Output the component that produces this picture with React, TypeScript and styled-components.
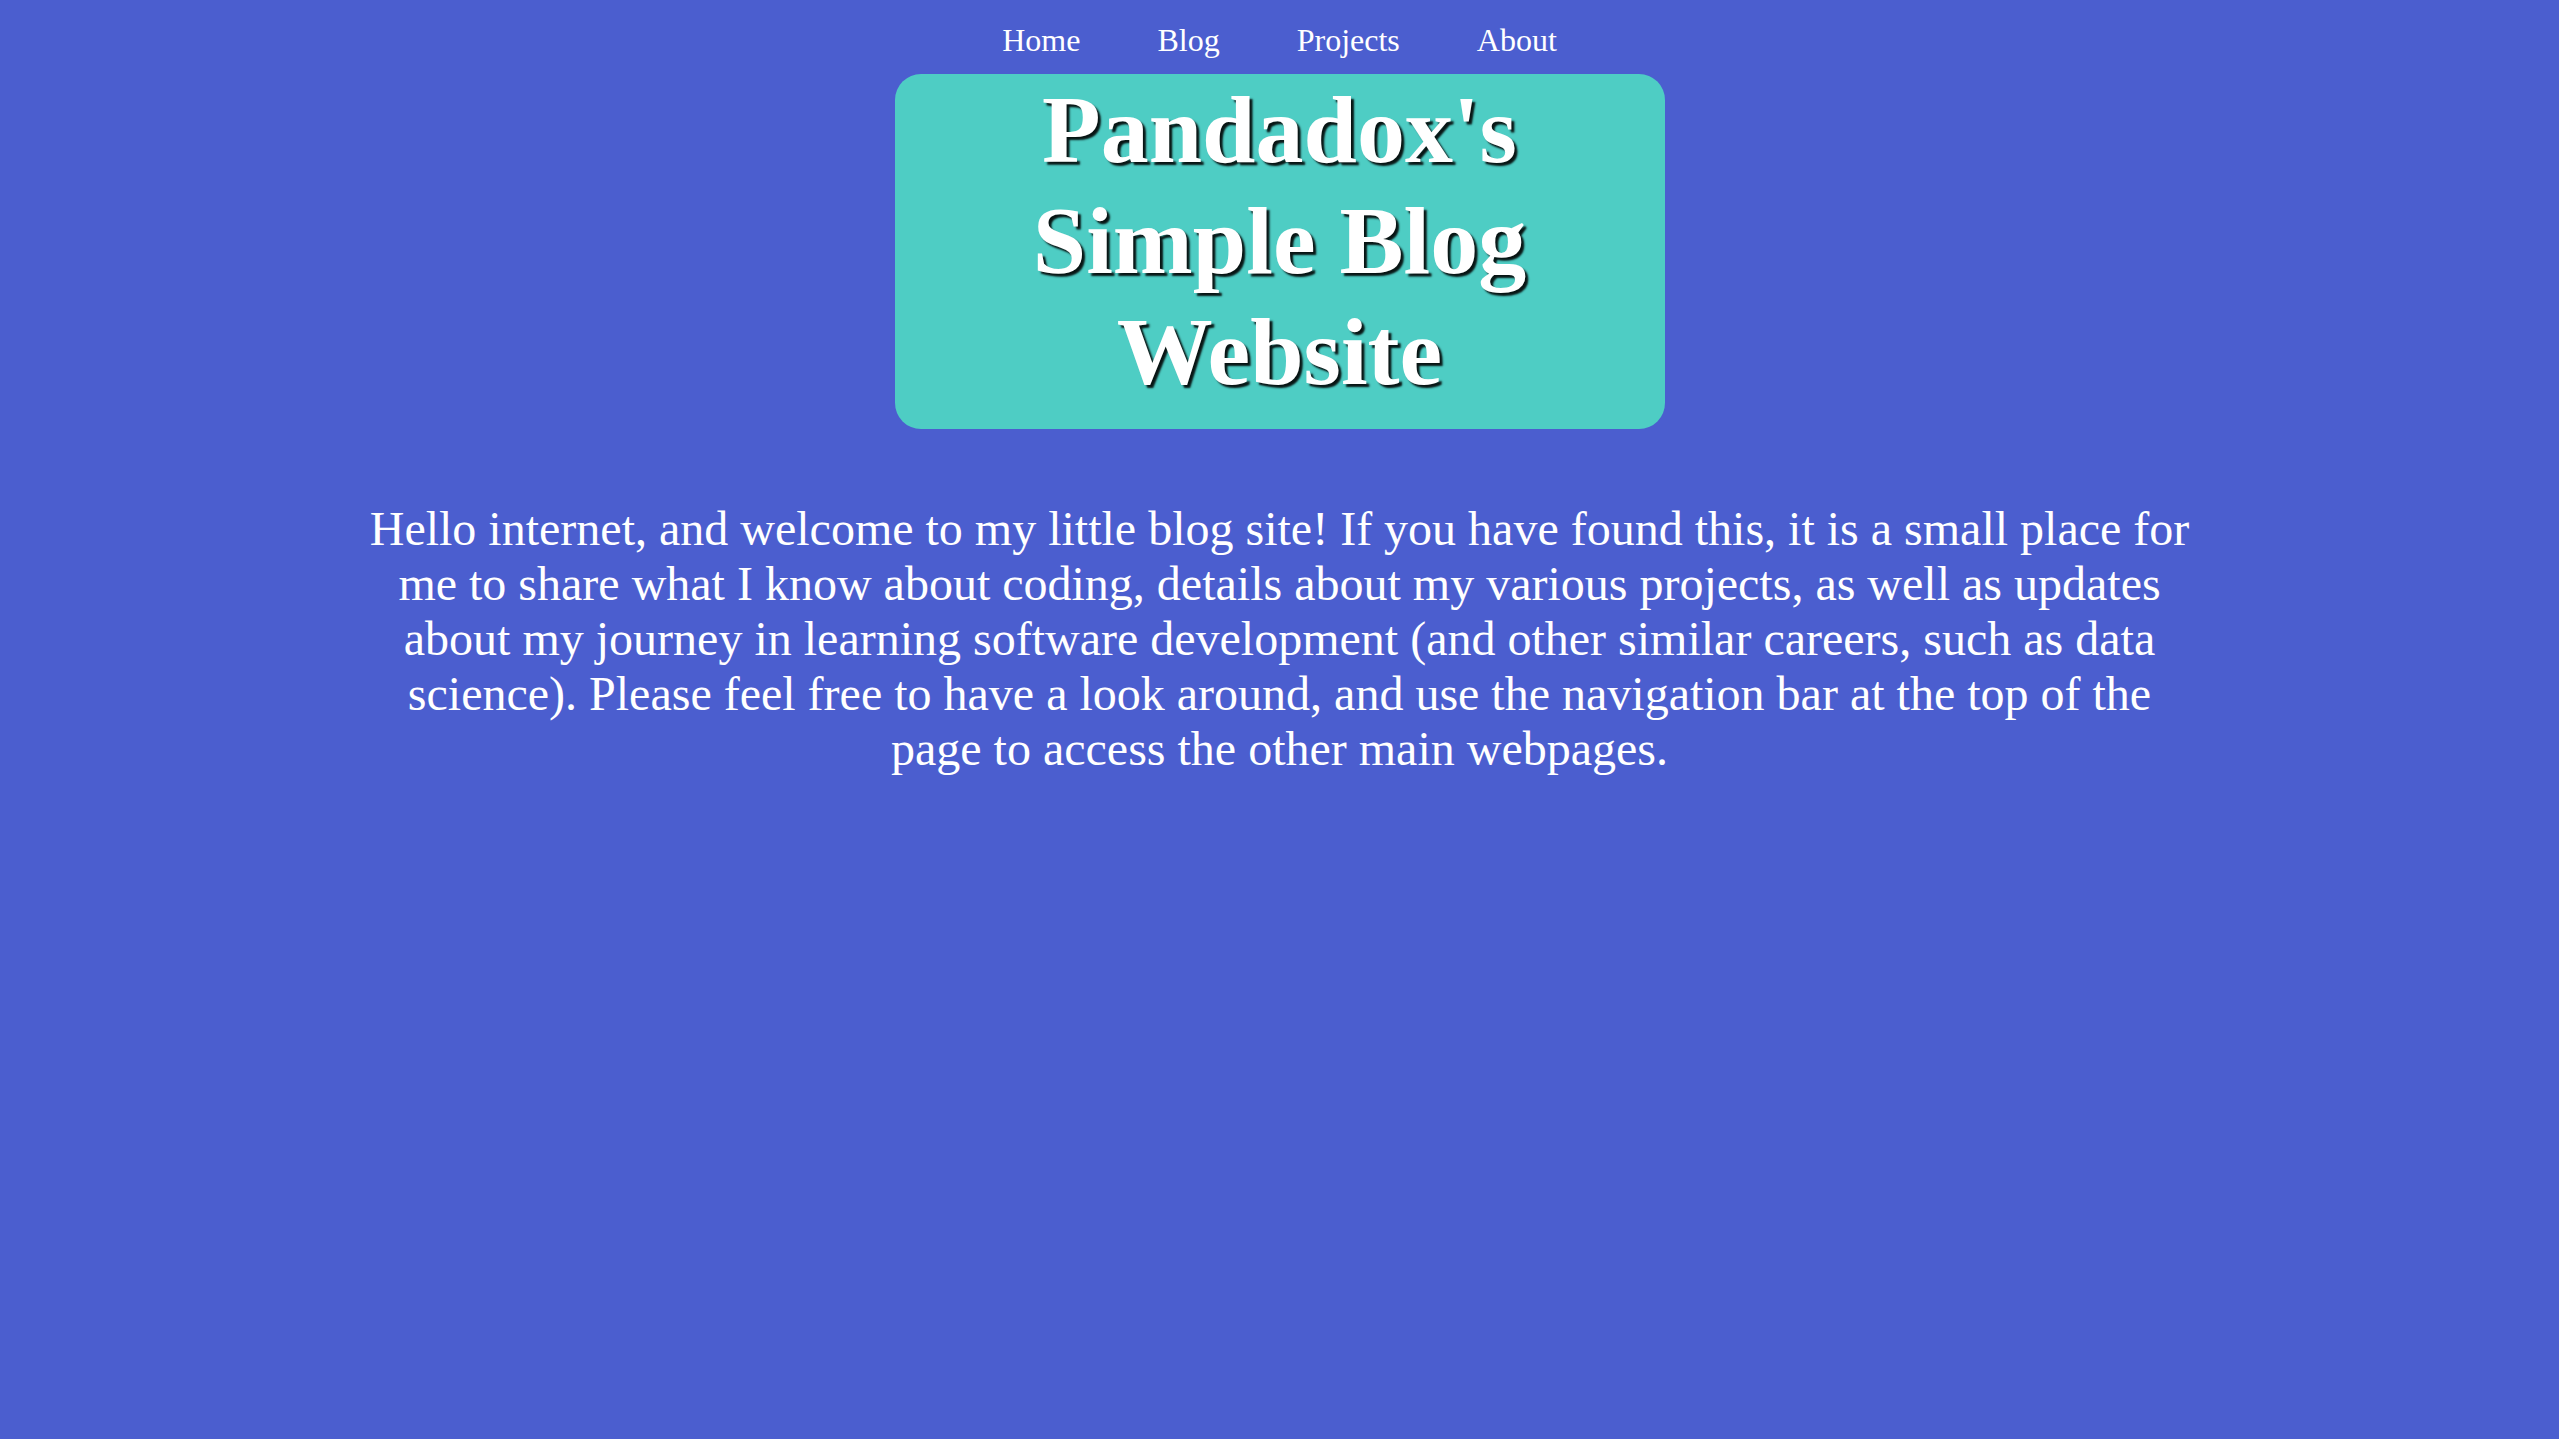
import React from "react";
import styled, { createGlobalStyle } from "styled-components";

const GlobalStyle = createGlobalStyle`
  html, body {
    margin: 0;
    padding: 0;
    background: #4b5ecf;
  }
  body {
    font-family: "Liberation Serif", "Times New Roman", serif;
    color: #ffffff;
    min-height: 100vh;
    overflow: hidden;
  }
`;

const Page = styled.div`
  display: flex;
  flex-direction: column;
  align-items: center;
  min-height: 100vh;
  background: #4b5ecf;
`;

const Nav = styled.nav`
  display: flex;
  justify-content: center;
  gap: 77px;
  padding: 22px 0 15px;
`;

const NavLink = styled.a`
  font-size: 32px;
  line-height: normal;
  color: #ffffff;
  text-decoration: none;
  cursor: pointer;
`;

const Banner = styled.header`
  width: 770px;
  box-sizing: border-box;
  background: #4ecdc4;
  border-radius: 26px;
  padding: 0 0 22px;
`;

const Title = styled.h1`
  margin: 0;
  font-size: 96px;
  font-weight: 700;
  line-height: normal;
  text-align: center;
  color: #ffffff;
  text-shadow: 3px 3px 2px rgba(0, 0, 0, 0.9);
`;

const Intro = styled.p`
  margin: 72px 0 0;
  max-width: 1830px;
  font-size: 48px;
  line-height: normal;
  text-align: center;
  color: #ffffff;
`;

const links = ["Home", "Blog", "Projects", "About"];

export default function App() {
  return (
    <>
      <GlobalStyle />
      <Page>
        <Nav>
          {links.map((l) => (
            <NavLink key={l}>{l}</NavLink>
          ))}
        </Nav>
        <Banner>
          <Title>Pandadox's Simple Blog Website</Title>
        </Banner>
        <Intro>
          Hello internet, and welcome to my little blog site! If you have found
          this, it is a small place for me to share what I know about coding,
          details about my various projects, as well as updates about my journey
          in learning software development (and other similar careers, such as
          data science). Please feel free to have a look around, and use the
          navigation bar at the top of the page to access the other main
          webpages.
        </Intro>
      </Page>
    </>
  );
}
